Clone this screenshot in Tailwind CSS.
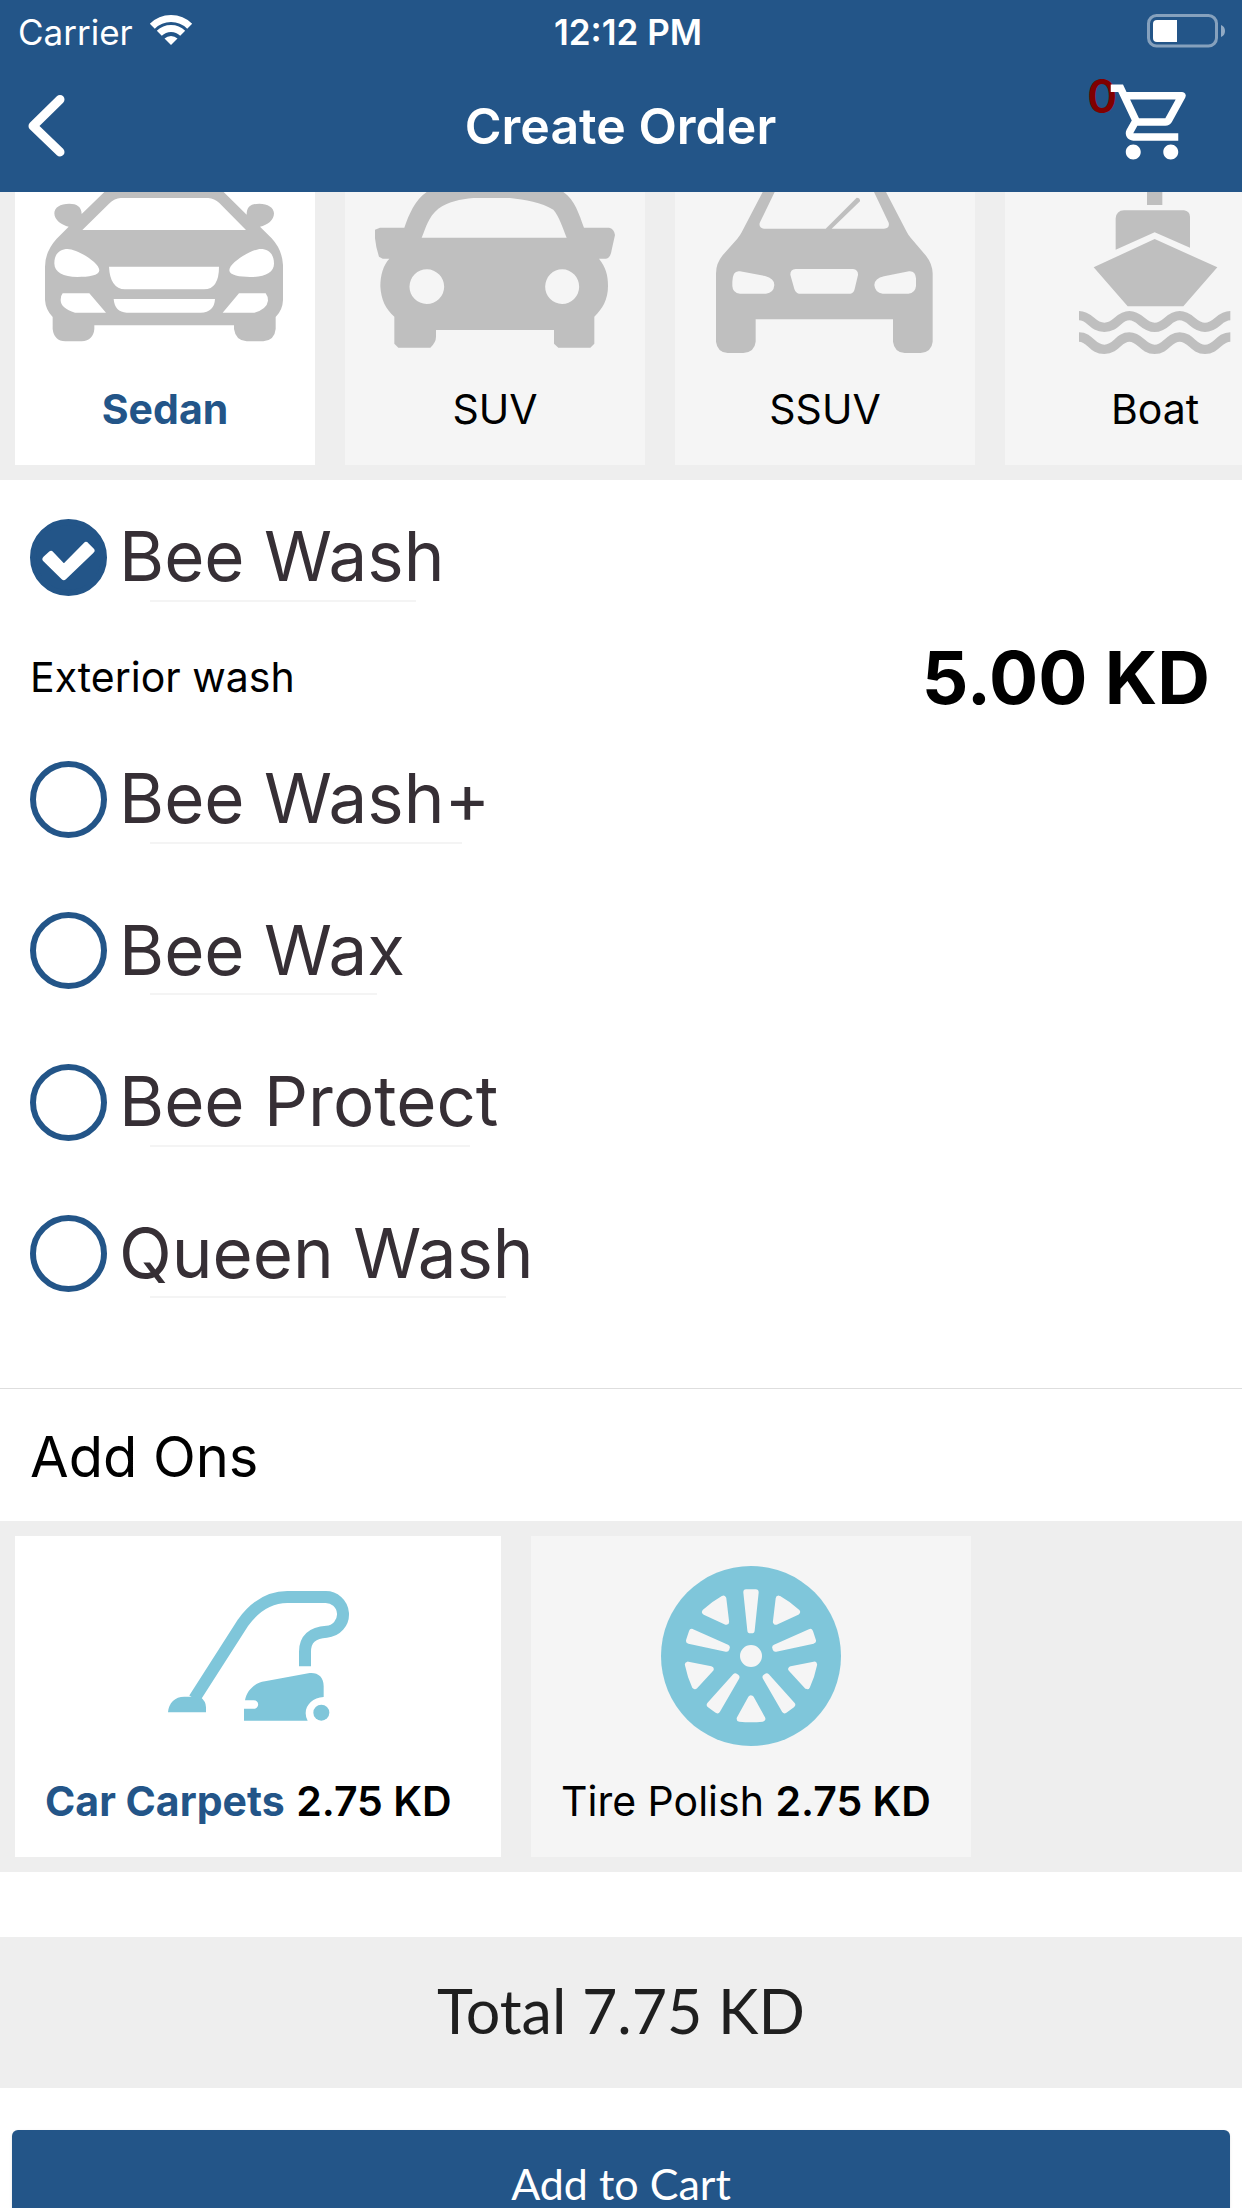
<!DOCTYPE html>
<html lang="en">
<head>
  <meta charset="UTF-8" />
  <meta name="viewport" content="width=device-width, initial-scale=1.0"/>
  <title>Create Order</title>
  <script src="https://cdn.jsdelivr.net/npm/@tailwindcss/browser@4"></script>
</head>
<body class="h-screen overflow-hidden bg-white text-black font-['Inter',sans-serif] flex flex-col">
  <header class="shrink-0 bg-[#235588] text-white">
    <div class="h-[60px] pl-[18px] pr-4 pt-1 grid grid-cols-3 items-center text-[35px] leading-[50px]">
      <div class="flex items-center gap-4">
        <span>Carrier</span>
        <svg class="w-[44px] h-[32px] -mt-1" viewBox="0 0 44 32" fill="none" stroke="#fff">
          <path d="M3.3 12.3a26.5 26.5 0 0 1 37.4 0" stroke-width="7"/>
          <path d="M10.3 19.3a16.5 16.5 0 0 1 23.4 0" stroke-width="7"/>
          <path d="M22 31l-6.500-6.500a9.500 9.500 0 0 1 13 0z" fill="#fff" stroke="none"/>
        </svg>
      </div>
      <span class="text-center font-semibold whitespace-nowrap pl-3">12:12 PM</span>
      <svg class="w-[79px] h-[35px] justify-self-end -mt-1" viewBox="1149 12 79 35">
        <rect x="1150.500" y="14.500" width="68" height="30.500" rx="8" fill="none" stroke="#fff" stroke-opacity=".45" stroke-width="3"/>
        <path d="M1223 24q4 1.500 4 6t-4 6z" fill="#fff" fill-opacity=".5"/>
        <path d="M1179 19h-20q-4 0-4 4v14q0 4 4 4h20z" fill="#fff"/>
      </svg>
    </div>
    <div class="h-[132px] pl-6 pr-[45px] grid grid-cols-[1fr_auto_1fr] items-center">
      <button type="button" aria-label="Back" class="w-11">
        <svg class="w-11 h-[66px]" viewBox="24 93 44 66" fill="none" stroke="#fff" stroke-width="9" stroke-linecap="round" stroke-linejoin="round">
          <path d="M60 99.500L33 126L60 152"/>
        </svg>
      </button>
      <h1 class="text-[50px] font-semibold pl-5">Create Order</h1>
      <button type="button" aria-label="Cart" class="relative justify-self-end -mt-2">
        <span class="absolute -left-[20px] -top-[15px] text-[46px] font-semibold text-[#800000]">0</span>
        <svg class="relative w-[90px] h-[90px]" viewBox="0 0 24 24" fill="#fff">
          <path d="M15.550 13c.75 0 1.410-.41 1.750-1.030l3.580-6.490A.996.996 0 0 0 20.010 4H5.210l-.94-2H1v2h2l3.600 7.590-1.350 2.440C4.520 15.370 5.480 17 7 17h12v-2H7l1.100-2h7.450zM6.160 6h12.150l-2.760 5H8.530L6.160 6zM7 18c-1.100 0-1.990.9-1.990 2S5.900 22 7 22s2-.9 2-2-.9-2-2-2zm10 0c-1.100 0-1.990.9-1.990 2s.89 2 1.990 2 2-.9 2-2-.9-2-2-2z"/>
        </svg>
      </button>
    </div>
  </header>

  <main class="flex-1 min-h-0 overflow-hidden flex flex-col">
    <!-- vehicle types -->
    <section class="shrink-0 bg-[#eee] px-[15px] pb-[15px] flex gap-[30px] overflow-hidden text-[41px] leading-[50px]">
      <button type="button" class="w-[300px] h-[273px] shrink-0 bg-white flex flex-col items-center text-[#235588] font-bold">
        <svg class="w-full h-[165px] mb-[27px]" viewBox="45 21 900 495" fill="#bfbfbf">
          <path fill-rule="evenodd" d="M313 21L245 87C245 65 230 56 208 56C180 56 163 68 163 85C163 105 185 121 206 125L170 161Q135 200 135 245V345Q137 375 158 396V432Q162 468 196 469H245Q280 466 283 432V421H702V432Q707 467 740 469H790Q824 466 827 432V396Q848 375 849 345V240Q847 195 815 160L780 125C803 121 822 105 822 85C822 68 803 56 778 56C753 56 740 65 740 89L671 21ZM247 135L327 56Q344 40 362 39H625Q643 40 658 54L738 135ZM163 235C163 206 180 192 203 192C230 192 298 232 298 256C298 272 266 276 232 276C190 276 163 262 163 235ZM688 256C688 232 757 192 782 192C806 192 822 207 822 236C822 262 795 276 750 276C720 276 688 271 688 256ZM327 245H657Q657 312 612 313H375Q330 311 327 245ZM341 342H645Q643 382 602 383H380Q344 381 341 342ZM188 325H268L318 383H225Q181 370 182 344Q182 332 188 325ZM717 325H797Q804 334 804 347Q801 372 763 383H668Z"/>
        </svg>
        Sedan
      </button>
      <button type="button" class="w-[300px] h-[273px] shrink-0 bg-[#f5f5f5] flex flex-col items-center">
        <svg class="w-full h-[165px] mb-[27px]" viewBox="45 21 900 495" fill="#bfbfbf">
          <path fill-rule="evenodd" d="M290 21C255 45 237 88 223 128H150L135 134V160Q138 190 147 215L158 221H178C160 240 151 270 151 303C153 345 167 372 193 395V476L205 488H301Q318 472 318 455V435H672V476L685 488H781L793 476V395C817 372 834 345 834 303C834 270 828 248 807 221H828Q842 219 845 195L855 150Q852 130 837 128H762C747 88 735 45 700 21ZM275 158C287 130 295 95 325 71C355 50 390 43 430 39H540C585 44 635 52 670 74C688 95 699 130 710 158ZM291 253A52 52 0 1 1 290 357A52 52 0 1 1 291 253ZM697 253A51 52 0 1 1 696 357A51 52 0 1 1 697 253Z"/>
        </svg>
        SUV
      </button>
      <button type="button" class="w-[300px] h-[273px] shrink-0 bg-[#f5f5f5] flex flex-col items-center">
        <svg class="w-full h-[165px] mb-[27px]" viewBox="45 21 900 495" fill="#bfbfbf">
          <path fill-rule="evenodd" d="M308 21L245 142Q240 152 232 161L188 211Q168 235 168 265V470Q172 502 203 504H250Q284 501 287 470V403H699V470Q703 502 734 504H782Q815 501 818 470V265Q817 236 798 212L752 158Q745 150 740 140L678 21H642L686 113Q690 130 672 131H515L600 49Q601 38 590 38L497 131H312Q296 129 299 114L344 21ZM217 290Q218 255 240 259L315 273Q343 280 343 300Q341 324 318 326H240Q218 324 217 303ZM643 300Q644 280 672 274L747 259Q766 257 768 280V303Q766 324 745 326H668Q645 323 643 300ZM391 269Q391 253 407 252H579Q595 254 594 270L584 312Q581 325 571 326H417Q408 325 403 312Z"/>
        </svg>
        SSUV
      </button>
      <button type="button" class="w-[300px] h-[273px] shrink-0 bg-[#f5f5f5] flex flex-col items-center">
        <svg class="w-full h-[165px] mb-[27px]" viewBox="75 21 900 495" fill="#bfbfbf">
          <path d="M501 21H547V60H501ZM407 194V100Q409 77 432 76H612Q629 78 630 95V188L524 142ZM524 162L712 247L610 364H443L341 247Z"/>
          <g fill="none" stroke="#bfbfbf" stroke-width="28">
            <path d="M297 392C332 392 335 427 373 427S414 392 448 392S488 427 524 427S564 392 599 392S639 427 675 427S716 392 751 392"/>
            <path d="M297 456C332 456 335 493 373 493S414 456 448 456S488 493 524 493S564 456 599 456S639 493 675 493S716 456 751 456"/>
          </g>
        </svg>
        Boat
      </button>
    </section>

    <!-- wash packages -->
    <fieldset class="shrink-0 px-[30px] pt-px h-[908px] text-[69px] text-[#362f35]">
      <label class="relative flex items-center gap-[12px] h-[152px] w-fit">
        <input type="radio" name="wash" checked class="peer appearance-none w-[77px] h-[77px] rounded-full border-[6px] border-[#235588] checked:bg-[#235588]"/>
        <svg class="absolute left-0 w-[77px] h-[77px] hidden peer-checked:block" viewBox="0 0 77 77" fill="#fff" stroke="#fff" stroke-width="6" stroke-linejoin="round">
          <path d="M21 35L33.800 48.500L56 26L61.500 31.500L33.800 58L15.500 40z"/>
        </svg>
        <span>Bee Wash</span>
        <span class="absolute left-[120px] right-7 bottom-[31px] h-[2px] bg-[#f4f4f4]"></span>
      </label>
      <div class="h-[90px] flex items-center justify-between text-black pr-[2px]">
        <p class="text-[41px]">Exterior wash</p>
        <p class="text-[73px] font-bold">5.00 KD</p>
      </div>
      <label class="relative flex items-center gap-[12px] h-[152px] w-fit">
        <input type="radio" name="wash" class="peer appearance-none w-[77px] h-[77px] rounded-full border-[6px] border-[#235588] checked:bg-[#235588]"/>
        <span>Bee Wash+</span>
        <span class="absolute left-[120px] right-7 bottom-[31px] h-[2px] bg-[#f4f4f4]"></span>
      </label>
      <label class="relative flex items-center gap-[12px] h-[151px] w-fit">
        <input type="radio" name="wash" class="peer appearance-none w-[77px] h-[77px] rounded-full border-[6px] border-[#235588] checked:bg-[#235588]"/>
        <span>Bee Wax</span>
        <span class="absolute left-[120px] right-7 bottom-[31px] h-[2px] bg-[#f4f4f4]"></span>
      </label>
      <label class="relative flex items-center gap-[12px] h-[152px] w-fit">
        <input type="radio" name="wash" class="peer appearance-none w-[77px] h-[77px] rounded-full border-[6px] border-[#235588] checked:bg-[#235588]"/>
        <span>Bee Protect</span>
        <span class="absolute left-[120px] right-7 bottom-[31px] h-[2px] bg-[#f4f4f4]"></span>
      </label>
      <label class="relative flex items-center gap-[12px] h-[151px] w-fit">
        <input type="radio" name="wash" class="peer appearance-none w-[77px] h-[77px] rounded-full border-[6px] border-[#235588] checked:bg-[#235588]"/>
        <span>Queen Wash</span>
        <span class="absolute left-[120px] right-7 bottom-[31px] h-[2px] bg-[#f4f4f4]"></span>
      </label>
    </fieldset>

    <!-- add ons -->
    <h2 class="shrink-0 h-[133px] border-t border-[#dedede] px-[30px] pt-1 flex items-center text-[56px]">Add Ons</h2>
    <section class="shrink-0 bg-[#eee] p-[15px] flex gap-[30px] text-[41px] leading-[50px]">
      <button type="button" class="w-[486px] h-[321px] bg-white flex flex-col items-start">
        <svg class="w-full h-[214px] mb-[26px]" viewBox="45 78 1458 642" fill="#7fc6da">
          <path d="M583 566L729 338Q785 261 862 261H974A52 52 0 0 1 980 365Q915 369 915 425V469" fill="none" stroke="#7fc6da" stroke-width="36"/>
          <path d="M504 607C506 578 525 560 553 560H600Q618 573 618 592V607ZM735 571C740 540 765 518 795 514L925 490C952 486 971 500 971 528V561C940 563 917 583 917 610Q917 622 923 632H732V596H762A12 12 0 0 0 762 571Z"/>
          <circle cx="964" cy="608" r="24"/>
        </svg>
        <span class="whitespace-nowrap pl-[30px]"><span class="font-bold text-[#235588]">Car Carpets</span> <span class="font-semibold">2.75 KD</span></span>
      </button>
      <button type="button" class="w-[440px] h-[321px] bg-[#f5f5f5] flex flex-col items-start">
        <svg class="w-full h-[214px] mb-[26px]" viewBox="33 78 1320 642">
          <circle cx="693" cy="438" r="270" fill="#7fc6da"/>
          <g fill="#f5f5f5" stroke="#f5f5f5" stroke-width="18" stroke-linejoin="round">
            <circle cx="693" cy="438" r="24"/>
            <path d="M679 247H707L695 361H691ZM693 565L727 626Q693 630 659 626Z"/>
            <path transform="rotate(72 693 438)" d="M679 247H707L695 361H691ZM693 565L727 626Q693 630 659 626Z"/>
            <path transform="rotate(144 693 438)" d="M679 247H707L695 361H691ZM693 565L727 626Q693 630 659 626Z"/>
            <path transform="rotate(216 693 438)" d="M679 247H707L695 361H691ZM693 565L727 626Q693 630 659 626Z"/>
            <path transform="rotate(288 693 438)" d="M679 247H707L695 361H691ZM693 565L727 626Q693 630 659 626Z"/>
          </g>
        </svg>
        <span class="whitespace-nowrap pl-[30px]">Tire Polish <span class="font-semibold">2.75 KD</span></span>
      </button>
    </section>

    <p class="shrink-0 mt-[65px] h-[151px] pb-1 bg-[#eee] flex items-center justify-center font-['Lato',sans-serif] text-[61px] text-[#1f1f1f]">Total 7.75 KD</p>
    <button type="button" class="shrink-0 mt-[42px] mx-3 h-[108px] rounded-[6px] bg-[#235588] text-white font-['Lato',sans-serif] text-[43px] shadow">Add to Cart</button>
  </main>
</body>
</html>
